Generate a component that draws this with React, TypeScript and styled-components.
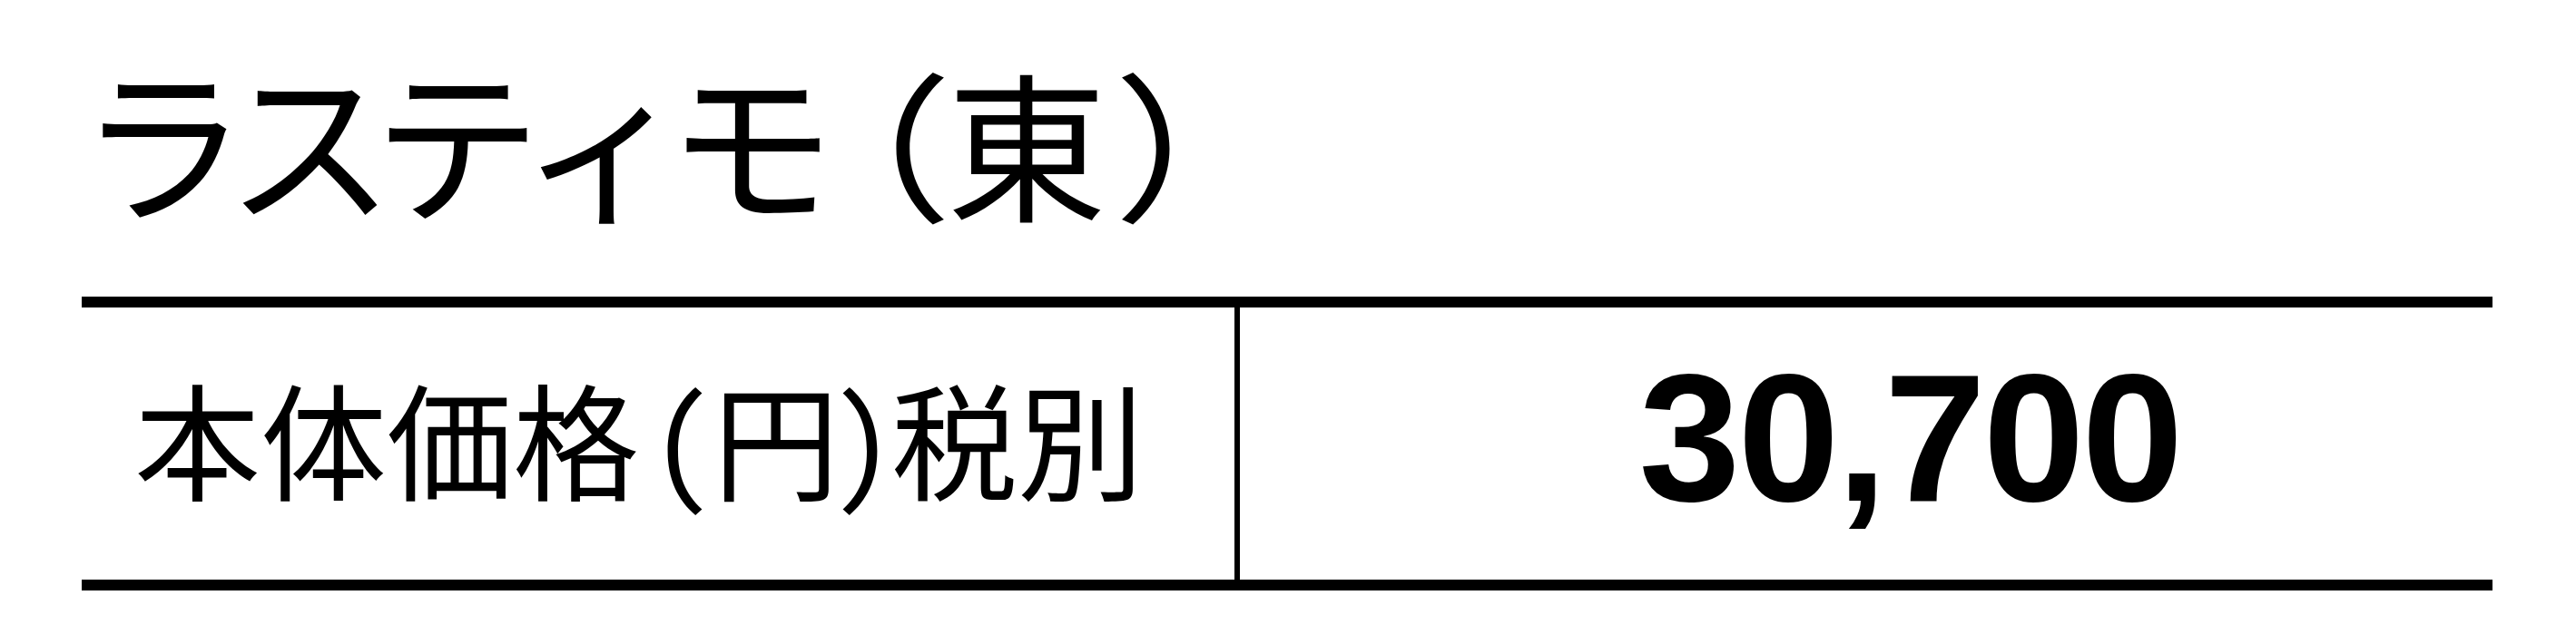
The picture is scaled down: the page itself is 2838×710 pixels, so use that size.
import React from "react";
import styled, { createGlobalStyle } from "styled-components";

const Global = createGlobalStyle`
  html, body { margin: 0; padding: 0; background: #ffffff; }
  body { font-family: "Noto Sans CJK JP", "Noto Sans", sans-serif; color: #000; }
`;

const Page = styled.div`
  width: 2838px;
  height: 710px;
  padding-left: 90px;
  box-sizing: border-box;
  display: flex;
  flex-direction: column;
`;

const Title = styled.h1`
  margin: 0;
  height: 327px;
  box-sizing: border-box;
  padding: 67px 0 0 1px;
  font-family: "Noto Sans CJK JP", sans-serif;
  font-weight: 400;
  font-size: 176px;
  letter-spacing: -14px;
  line-height: 1;
  white-space: nowrap;
`;

const Kana = styled.span`
  display: inline-block;
  transform: scale(1.05, 1.06);
  transform-origin: 45% 86%;
`;

const Bracket = styled.span<{ $before: number; $after: number }>`
  display: inline-block;
  margin-left: ${(p) => p.$before}px;
  margin-right: ${(p) => p.$after}px;
  transform: scaleX(1.15);
`;

const Table = styled.div`
  width: 2656px;
  display: grid;
  grid-template-columns: 1270px 1fr;
  height: 324px;
  box-sizing: border-box;
  border-top: 12px solid #000;
  border-bottom: 12px solid #000;
`;

const LabelCell = styled.div`
  display: flex;
  align-items: center;
  padding: 0 0 18px 58px;
  font-family: "Noto Sans CJK JP", sans-serif;
  font-size: 139px;
  line-height: 1;
  white-space: nowrap;
`;

const HalfWidth = styled.span<{ $before: number; $after: number }>`
  font-feature-settings: "hwid" 1;
  margin-left: ${(p) => p.$before}px;
  margin-right: ${(p) => p.$after}px;
`;

const ValueCell = styled.div`
  border-left: 6px solid #000;
  display: flex;
  align-items: center;
  justify-content: center;
  padding: 0 0 14px 96px;
  font-family: "Liberation Sans", Arial, sans-serif;
  font-weight: 700;
  font-size: 201px;
  letter-spacing: -3px;
  line-height: 1;
`;

const kana = ["ラ", "ス", "テ", "ィ", "モ"];

export default function App() {
  return (
    <>
      <Global />
      <Page>
        <Title>
          {kana.map((k) => (
            <Kana key={k}>{k}</Kana>
          ))}
          <Bracket $before={-42} $after={22}>（</Bracket>東
          <Bracket $before={34} $after={0}>）</Bracket>
        </Title>
        <Table>
          <LabelCell>
            本体価格
            <HalfWidth $before={12} $after={0}>（</HalfWidth>円
            <HalfWidth $before={-8} $after={-4}>）</HalfWidth>税別
          </LabelCell>
          <ValueCell>30,700</ValueCell>
        </Table>
      </Page>
    </>
  );
}
